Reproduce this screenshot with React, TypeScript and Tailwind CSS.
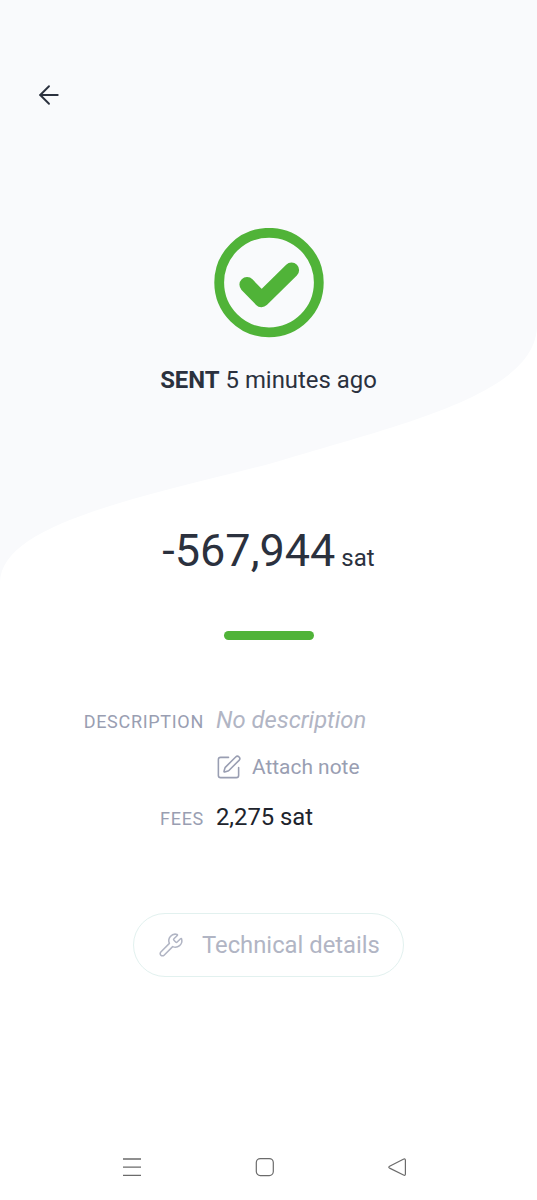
import * as React from 'react';
import { ArrowLeft, SquarePen, Wrench } from 'lucide-react';

interface DetailRowProps {
  label?: string;
  children: React.ReactNode;
}

const Backdrop = () => (
  <svg
    className="[grid-area:1/1] w-full h-[600px]"
    viewBox="0 0 537 600"
    preserveAspectRatio="none"
    aria-hidden="true"
  >
    <path
      d="M0 0H537V325C537 395 400 424 269 464C130 499 0 526 0 583Z"
      fill="#f9fafc"
    />
  </svg>
);

const SuccessIcon = () => (
  <svg className="size-[110px]" viewBox="0 0 110 110" fill="none">
    <circle cx="55" cy="54.6" r="49.8" stroke="#50b338" strokeWidth="9.8" />
    <path
      d="M33 56.6L47.5 71.6L77.5 42.1"
      stroke="#50b338"
      strokeWidth="15.2"
      strokeLinecap="round"
      strokeLinejoin="round"
    />
  </svg>
);

const DetailRow = ({ label, children }: DetailRowProps) => (
  <div className="grid grid-cols-[204px_1fr] gap-x-3 items-baseline">
    <span className="text-right text-[18px] leading-[28px] tracking-[0.7px] text-[#999eb2]">
      {label}
    </span>
    <div>{children}</div>
  </div>
);

const NavigationBar = () => (
  <nav className="mt-auto h-[66px] flex text-[#6b6b6b]">
    <svg className="ml-[120px] mt-[21px] size-6" viewBox="0 0 24 24" fill="none">
      <path d="M3 4H21M3 12.2H21M3 20.3H21" stroke="currentColor" strokeWidth="1.3" />
    </svg>
    <svg className="ml-[109px] mt-[21px] size-6" viewBox="0 0 24 24" fill="none">
      <rect
        x="3.3"
        y="3.6"
        width="17"
        height="17"
        rx="4"
        stroke="currentColor"
        strokeWidth="1.2"
      />
    </svg>
    <svg className="ml-[108px] mt-[21px] size-6" viewBox="0 0 24 24" fill="none">
      <path
        d="M4.6 11.3L18.3 4.2Q20.4 3.3 20.4 5.3V19Q20.4 21 18.5 20L4.6 13.1Q3 12.2 4.6 11.3Z"
        stroke="currentColor"
        strokeWidth="1.2"
        strokeLinejoin="round"
      />
    </svg>
  </nav>
);

const App = () => {
  return (
    <div className="grid h-[1200px] w-[537px] overflow-hidden bg-white font-[Roboto,sans-serif] text-[#2b313e]">
      <Backdrop />
      <main className="[grid-area:1/1] flex flex-col">
        <header className="pt-20 pl-[34px] h-[228px]">
          <button type="button" className="block" aria-label="Back">
            <ArrowLeft size={30} strokeWidth={1.5} />
          </button>
        </header>

        <section className="flex flex-col items-center">
          <SuccessIcon />
          <p className="mt-[26px] text-[23.9px] leading-8 whitespace-nowrap">
            <b className="font-bold">SENT</b> 5 minutes ago
          </p>
          <p className="mt-[127px] h-[56px] leading-[56px] whitespace-nowrap">
            <span className="text-[45px]">-567,944</span>
            <span className="text-[24px]"> sat</span>
          </p>
          <div className="mt-[52px] h-[9px] w-[90px] rounded-full bg-[#50b338]" />
        </section>

        <section className="mt-[64px] flex flex-col">
          <DetailRow label="DESCRIPTION">
            <span className="text-[23.8px] leading-8 italic text-[#b1b5c4]">
              No description
            </span>
          </DetailRow>
          <div className="mt-[15px] mb-[18px]">
            <DetailRow>
              <button
                type="button"
                className="-ml-px flex items-center gap-[10px] text-[20.9px] leading-8 text-[#999eb2]"
              >
                <SquarePen size={27} strokeWidth={1.4} />
                Attach note
              </button>
            </DetailRow>
          </div>
          <DetailRow label="FEES">
            <span className="text-[23.8px] leading-8 text-[#20232c]">2,275 sat</span>
          </DetailRow>
        </section>

        <button
          type="button"
          className="mt-[80px] self-center flex items-center w-[271px] h-16 rounded-full border border-[#e2f1ef] pl-6 gap-[18px] text-[23.8px] text-[#b1b5c4] whitespace-nowrap"
        >
          <Wrench size={26} strokeWidth={1.4} />
          <span className="pt-0.5">Technical details</span>
        </button>

        <NavigationBar />
      </main>
    </div>
  );
};

export default App;
